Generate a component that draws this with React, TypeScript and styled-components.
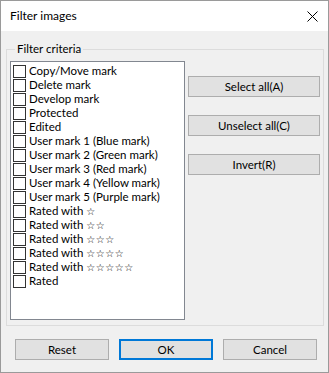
import styled, { createGlobalStyle } from "styled-components";

const GlobalStyle = createGlobalStyle`
  html, body {
    margin: 0;
    padding: 0;
    background: #ffffff;
  }
  body {
    font-family: Lato, "Noto Sans", sans-serif;
    font-size: 11.5px;
    color: #000;
  }
`;

const Window = styled.div`
  width: 329px;
  height: 373px;
  box-sizing: border-box;
  border: 1px solid #9a9a9a;
  background: #f0f0f0;
  display: flex;
  flex-direction: column;
`;

const TitleBar = styled.div`
  height: 30px;
  background: #ffffff;
  display: flex;
  align-items: center;
  justify-content: space-between;
  padding: 0 10px 0 9px;
  flex-shrink: 0;
`;

const Title = styled.span`
  font-size: 12px;
  line-height: 16px;
`;

const CloseButton = styled.div`
  width: 12px;
  height: 12px;
  display: flex;
  align-items: center;
  justify-content: center;
`;

const Body = styled.div`
  flex: 1;
  padding: 10px 4px 0 5px;
  display: flex;
  flex-direction: column;
`;

const GroupBox = styled.fieldset`
  margin: 0;
  border: 1px solid #dcdcdc;
  padding: 4px 3px 5px 3px;
  display: flex;
  gap: 3px;
`;

const Legend = styled.legend`
  margin-left: 5px;
  padding: 0 2px;
  font-size: 11.5px;
  line-height: 16px;
`;

const List = styled.div`
  width: 175px;
  height: 259px;
  box-sizing: border-box;
  border: 1px solid #828790;
  background: #ffffff;
  padding: 2px 0 0 2px;
`;

const Row = styled.div`
  height: 14px;
  display: flex;
  align-items: center;
  gap: 3px;
  white-space: nowrap;
  line-height: 14px;
`;

const Box = styled.span`
  width: 13px;
  height: 13px;
  box-sizing: border-box;
  border: 1px solid #333333;
  background: #ffffff;
  flex-shrink: 0;
`;

const Stars = styled.span`
  font-family: "DejaVu Sans", sans-serif;
  font-size: 10px;
  letter-spacing: 0.5px;
  color: #000;
`;

const SideButtons = styled.div`
  display: flex;
  flex-direction: column;
  gap: 18px;
  padding-top: 15px;
`;

const Button = styled.button<{ $width: number; $default?: boolean }>`
  width: ${(p) => p.$width}px;
  height: 21px;
  box-sizing: border-box;
  background: #e1e1e1;
  border: ${(p) => (p.$default ? "2px solid #0078d7" : "1px solid #adadad")};
  border-radius: 0;
  font-family: Lato, "Noto Sans", sans-serif;
  font-size: 11.5px;
  color: #000;
  padding: 0;
  line-height: 16px;
`;

const Footer = styled.div`
  display: flex;
  gap: 10px;
  padding: 13px 0 0 9px;
`;

const items: { label: string; stars?: number }[] = [
  { label: "Copy/Move mark" },
  { label: "Delete mark" },
  { label: "Develop mark" },
  { label: "Protected" },
  { label: "Edited" },
  { label: "User mark 1 (Blue mark)" },
  { label: "User mark 2 (Green mark)" },
  { label: "User mark 3 (Red mark)" },
  { label: "User mark 4 (Yellow mark)" },
  { label: "User mark 5 (Purple mark)" },
  { label: "Rated with ", stars: 1 },
  { label: "Rated with ", stars: 2 },
  { label: "Rated with ", stars: 3 },
  { label: "Rated with ", stars: 4 },
  { label: "Rated with ", stars: 5 },
  { label: "Rated" },
];

export default function App() {
  return (
    <>
      <GlobalStyle />
      <Window>
        <TitleBar>
          <Title>Filter images</Title>
          <CloseButton>
            <svg width="11" height="11" viewBox="0 0 11 11">
              <path d="M0.5 0.5 L10.5 10.5 M10.5 0.5 L0.5 10.5" stroke="#000" strokeWidth="1" fill="none" />
            </svg>
          </CloseButton>
        </TitleBar>
        <Body>
          <GroupBox>
            <Legend>Filter criteria</Legend>
            <List>
              {items.map((it, i) => (
                <Row key={i}>
                  <Box />
                  <span>
                    {it.label}
                    {it.stars ? <Stars>{"☆".repeat(it.stars)}</Stars> : null}
                  </span>
                </Row>
              ))}
            </List>
            <SideButtons>
              <Button $width={132}>Select all(A)</Button>
              <Button $width={132}>Unselect all(C)</Button>
              <Button $width={132}>Invert(R)</Button>
            </SideButtons>
          </GroupBox>
          <Footer>
            <Button $width={94}>Reset</Button>
            <Button $width={94} $default>
              OK
            </Button>
            <Button $width={94}>Cancel</Button>
          </Footer>
        </Body>
      </Window>
    </>
  );
}
